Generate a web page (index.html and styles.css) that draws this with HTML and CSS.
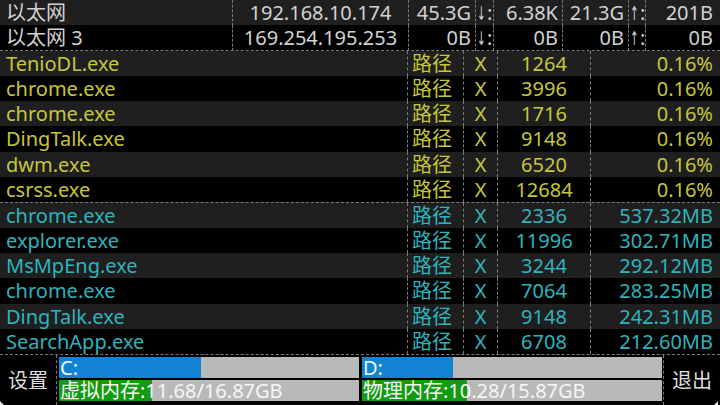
FILE: index.html
```html
<!DOCTYPE html>
<html lang="zh-CN">
<head>
<meta charset="utf-8">
<title>Monitor</title>
<link rel="stylesheet" href="styles.css">
</head>
<body>
<div class="app">
  <div class="rows">
    <div class="net row alt">
      <div class="c name">以太网</div>
      <div class="c sep ip">192.168.10.174</div>
      <div class="c sep r">45.3G</div>
      <div class="c sep arr"><span class="ag">↓</span>:</div>
      <div class="c sep r">6.38K</div>
      <div class="c sep r">21.3G</div>
      <div class="c sep arr"><span class="ag">↑</span>:</div>
      <div class="c sep r last">201B</div>
    </div>
    <div class="net row divide">
      <div class="c name">以太网 3</div>
      <div class="c sep ip">169.254.195.253</div>
      <div class="c sep r">0B</div>
      <div class="c sep arr"><span class="ag">↓</span>:</div>
      <div class="c sep r">0B</div>
      <div class="c sep r">0B</div>
      <div class="c sep arr"><span class="ag">↑</span>:</div>
      <div class="c sep r last">0B</div>
    </div>

    <div class="proc row alt cpu"><div class="c name">TenioDL.exe</div><div class="c sep path">路径</div><div class="c sep x">X</div><div class="c sep pid">1264</div><div class="c sep r last">0.16%</div></div>
    <div class="proc row cpu"><div class="c name">chrome.exe</div><div class="c sep path">路径</div><div class="c sep x">X</div><div class="c sep pid">3996</div><div class="c sep r last">0.16%</div></div>
    <div class="proc row alt cpu"><div class="c name">chrome.exe</div><div class="c sep path">路径</div><div class="c sep x">X</div><div class="c sep pid">1716</div><div class="c sep r last">0.16%</div></div>
    <div class="proc row cpu"><div class="c name">DingTalk.exe</div><div class="c sep path">路径</div><div class="c sep x">X</div><div class="c sep pid">9148</div><div class="c sep r last">0.16%</div></div>
    <div class="proc row alt cpu"><div class="c name">dwm.exe</div><div class="c sep path">路径</div><div class="c sep x">X</div><div class="c sep pid">6520</div><div class="c sep r last">0.16%</div></div>
    <div class="proc row cpu"><div class="c name">csrss.exe</div><div class="c sep path">路径</div><div class="c sep x">X</div><div class="c sep pid">12684</div><div class="c sep r last">0.16%</div></div>

    <div class="proc row alt mem top-divide"><div class="c name">chrome.exe</div><div class="c sep path">路径</div><div class="c sep x">X</div><div class="c sep pid">2336</div><div class="c sep r last">537.32MB</div></div>
    <div class="proc row mem"><div class="c name">explorer.exe</div><div class="c sep path">路径</div><div class="c sep x">X</div><div class="c sep pid">11996</div><div class="c sep r last">302.71MB</div></div>
    <div class="proc row alt mem"><div class="c name">MsMpEng.exe</div><div class="c sep path">路径</div><div class="c sep x">X</div><div class="c sep pid">3244</div><div class="c sep r last">292.12MB</div></div>
    <div class="proc row mem"><div class="c name">chrome.exe</div><div class="c sep path">路径</div><div class="c sep x">X</div><div class="c sep pid">7064</div><div class="c sep r last">283.25MB</div></div>
    <div class="proc row alt mem"><div class="c name">DingTalk.exe</div><div class="c sep path">路径</div><div class="c sep x">X</div><div class="c sep pid">9148</div><div class="c sep r last">242.31MB</div></div>
    <div class="proc row mem"><div class="c name">SearchApp.exe</div><div class="c sep path">路径</div><div class="c sep x">X</div><div class="c sep pid">6708</div><div class="c sep r last">212.60MB</div></div>
  </div>

  <div class="footer">
    <div class="btn">设置</div>
    <div class="bars">
      <div class="col">
        <div class="bar"><div class="fill disk" style="width:47.3%"></div><span class="label">C:</span></div>
        <div class="bar"><div class="fill ram" style="width:30.9%"></div><span class="label">虚拟内存:11.68/16.87GB</span></div>
      </div>
      <div class="col">
        <div class="bar"><div class="fill disk" style="width:30.2%"></div><span class="label">D:</span></div>
        <div class="bar"><div class="fill ram" style="width:35%"></div><span class="label">物理内存:10.28/15.87GB</span></div>
      </div>
    </div>
    <div class="btn sep-l">退出</div>
  </div>
  <div class="grip grip-l"></div>
  <div class="grip grip-r"></div>
</div>
</body>
</html>
```

FILE: styles.css
```css
html, body {
  margin: 0;
  padding: 0;
  background: #000;
}

body {
  width: 720px;
  height: 405px;
  overflow: hidden;
  font-family: "Noto Sans", "Noto Sans CJK SC", "DejaVu Sans", sans-serif;
  font-size: 20px;
}

.app {
  position: relative;
  width: 720px;
  height: 405px;
  display: flex;
  flex-direction: column;
}

.rows {
  display: flex;
  flex-direction: column;
}

.row {
  display: grid;
  height: 25.3px;
  line-height: 25px;
  box-sizing: border-box;
  white-space: nowrap;
}

.row.alt {
  background: #1f1f1f;
}

.net {
  grid-template-columns: 232px 176px 67px 18px 69px 66px 17px 1fr;
  color: #d2d2d2;
}

.proc {
  grid-template-columns: 407px 56px 34px 93px 1fr;
}

.cpu { color: #c6c63c; }
.mem { color: #2fb3bd; }

.divide {
  border-bottom: 1px dashed #7a7a7a;
}

.top-divide {
  border-top: 1px dashed #7a7a7a;
}

.c {
  min-width: 0;
}

.sep {
  border-left: 1px dashed #7a7a7a;
}

.name {
  padding-left: 6px;
}

.ip {
  text-align: center;
}

.r {
  text-align: right;
  padding-right: 4px;
}

.r.last {
  padding-right: 7px;
}

.arr {
  padding-left: 1px;
  display: flex;
  align-items: baseline;
}

.ag {
  display: inline-block;
  width: 9px;
  font-family: "DejaVu Sans", sans-serif;
  font-size: 19px;
  transform: scaleX(0.55);
  transform-origin: left center;
  margin-right: 1px;
}

.path {
  padding-left: 4px;
}

.x {
  text-align: center;
}

.pid {
  text-align: center;
}

.footer {
  flex: 1;
  display: grid;
  grid-template-columns: 57px 1fr 57px;
  border-top: 1px dashed #7a7a7a;
}

.btn {
  color: #dedede;
  display: flex;
  align-items: center;
  justify-content: center;
  padding-bottom: 2px;
  border-right: 1px dashed #7a7a7a;
}

.btn.sep-l {
  border-right: none;
  border-left: 1px dashed #7a7a7a;
}

.bars {
  display: flex;
  gap: 3px;
  padding: 2px 1px 0 2px;
}

.col {
  flex: 1;
  display: flex;
  flex-direction: column;
  gap: 2px;
}

.bar {
  position: relative;
  height: 21px;
  background: #b9b9b9;
}

.fill {
  height: 100%;
}

.disk { background: #1283d3; }
.ram { background: #139a13; }

.label {
  position: absolute;
  left: 1px;
  top: 0;
  line-height: 21px;
  color: #f6f6f6;
  white-space: nowrap;
}

.grip {
  position: absolute;
  bottom: 0;
  width: 0;
  height: 0;
}

.grip-l {
  left: 0;
  border-left: 4px solid #e0e0e0;
  border-top: 4px solid transparent;
}

.grip-r {
  right: 2px;
  border-right: 4px solid #e0e0e0;
  border-top: 4px solid transparent;
}
```
